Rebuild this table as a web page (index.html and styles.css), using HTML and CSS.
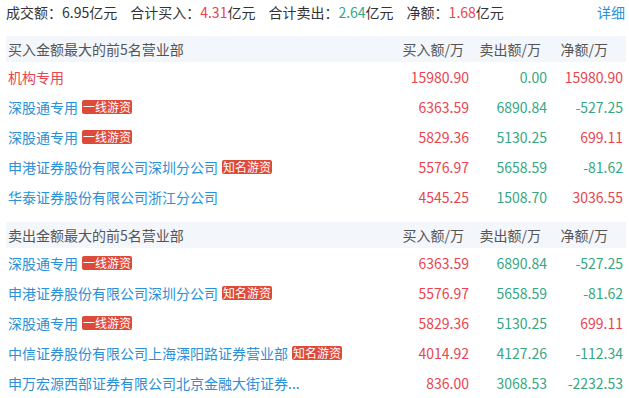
FILE: index.html
```html
<!DOCTYPE html>
<html lang="zh-CN">
<head>
<meta charset="utf-8">
<link rel="stylesheet" href="styles.css">
</head>
<body>
<div class="wrap">
  <div class="summary">
    <div class="stats">
      <span class="stat">成交额：6.95亿元</span>
      <span class="stat">合计买入：<em class="up">4.31</em>亿元</span>
      <span class="stat">合计卖出：<em class="down">2.64</em>亿元</span>
      <span class="stat">净额：<em class="up">1.68</em>亿元</span>
    </div>
    <a class="more">详细</a>
  </div>

  <div class="section">
    <div class="row head">
      <div class="name">买入金额最大的前5名营业部</div>
      <div class="num h1">买入额/万</div>
      <div class="num h2">卖出额/万</div>
      <div class="num h3">净额/万</div>
    </div>
    <div class="row">
      <div class="name"><span class="org">机构专用</span></div>
      <div class="num up">15980.90</div>
      <div class="num down">0.00</div>
      <div class="num up">15980.90</div>
    </div>
    <div class="row">
      <div class="name"><span class="link">深股通专用</span><span class="tag">一线游资</span></div>
      <div class="num up">6363.59</div>
      <div class="num down">6890.84</div>
      <div class="num down">-527.25</div>
    </div>
    <div class="row">
      <div class="name"><span class="link">深股通专用</span><span class="tag">一线游资</span></div>
      <div class="num up">5829.36</div>
      <div class="num down">5130.25</div>
      <div class="num up">699.11</div>
    </div>
    <div class="row">
      <div class="name"><span class="link">申港证券股份有限公司深圳分公司</span><span class="tag">知名游资</span></div>
      <div class="num up">5576.97</div>
      <div class="num down">5658.59</div>
      <div class="num down">-81.62</div>
    </div>
    <div class="row">
      <div class="name"><span class="link">华泰证券股份有限公司浙江分公司</span></div>
      <div class="num up">4545.25</div>
      <div class="num down">1508.70</div>
      <div class="num up">3036.55</div>
    </div>
  </div>

  <div class="section">
    <div class="row head">
      <div class="name">卖出金额最大的前5名营业部</div>
      <div class="num h1">买入额/万</div>
      <div class="num h2">卖出额/万</div>
      <div class="num h3">净额/万</div>
    </div>
    <div class="row">
      <div class="name"><span class="link">深股通专用</span><span class="tag">一线游资</span></div>
      <div class="num up">6363.59</div>
      <div class="num down">6890.84</div>
      <div class="num down">-527.25</div>
    </div>
    <div class="row">
      <div class="name"><span class="link">申港证券股份有限公司深圳分公司</span><span class="tag">知名游资</span></div>
      <div class="num up">5576.97</div>
      <div class="num down">5658.59</div>
      <div class="num down">-81.62</div>
    </div>
    <div class="row">
      <div class="name"><span class="link">深股通专用</span><span class="tag">一线游资</span></div>
      <div class="num up">5829.36</div>
      <div class="num down">5130.25</div>
      <div class="num up">699.11</div>
    </div>
    <div class="row">
      <div class="name"><span class="link">中信证券股份有限公司上海溧阳路证券营业部</span><span class="tag">知名游资</span></div>
      <div class="num up">4014.92</div>
      <div class="num down">4127.26</div>
      <div class="num down">-112.34</div>
    </div>
    <div class="row">
      <div class="name"><span class="link">申万宏源西部证券有限公司北京金融大街证券...</span></div>
      <div class="num up">836.00</div>
      <div class="num down">3068.53</div>
      <div class="num down">-2232.53</div>
    </div>
  </div>
</div>
</body>
</html>
```

FILE: styles.css
```css
html, body {
  margin: 0;
  padding: 0;
  background: #fff;
}
body {
  font-family: "Noto Sans CJK SC", "Microsoft YaHei", sans-serif;
  font-size: 14px;
  color: #333;
}
.wrap {
  width: 620px;
  padding: 0 0 0 6px;
}
.summary {
  display: flex;
  justify-content: space-between;
  align-items: center;
  height: 24px;
  line-height: 24px;
  margin-bottom: 12px;
}
.stats {
  display: flex;
  gap: 13px;
}
.stat em {
  font-style: normal;
}
.more {
  color: #2a90d8;
  padding-right: 1px;
}
.section {
  margin-bottom: 10px;
}
.row {
  display: grid;
  grid-template-columns: 1fr 78px 78px 77px;
  height: 30px;
  align-items: center;
  white-space: nowrap;
}
.row.head {
  height: 26px;
  background: #f3f6fa;
  color: #555;
}
.name {
  padding-left: 2px;
  display: flex;
  align-items: center;
}
.num {
  text-align: right;
}
.row .num:nth-child(2) { padding-right: 2px; }
.row .num:nth-child(3) { padding-right: 2px; }
.row .num:last-child { padding-right: 3px; }
.head .num.h1 { padding-right: 7px; }
.head .num.h2 { padding-right: 8px; }
.head .num.h3 { padding-right: 18px; }
.up { color: #e8454f; }
.down { color: #35a782; }
.org { color: #e8454f; }
.link { color: #2a90d8; }
.tag {
  display: inline-block;
  margin-left: 4px;
  height: 14px;
  line-height: 14px;
  padding: 0 1px;
  font-size: 12px;
  color: #fff;
  background: #dd4a3a;
  border-radius: 2px;
}
```
